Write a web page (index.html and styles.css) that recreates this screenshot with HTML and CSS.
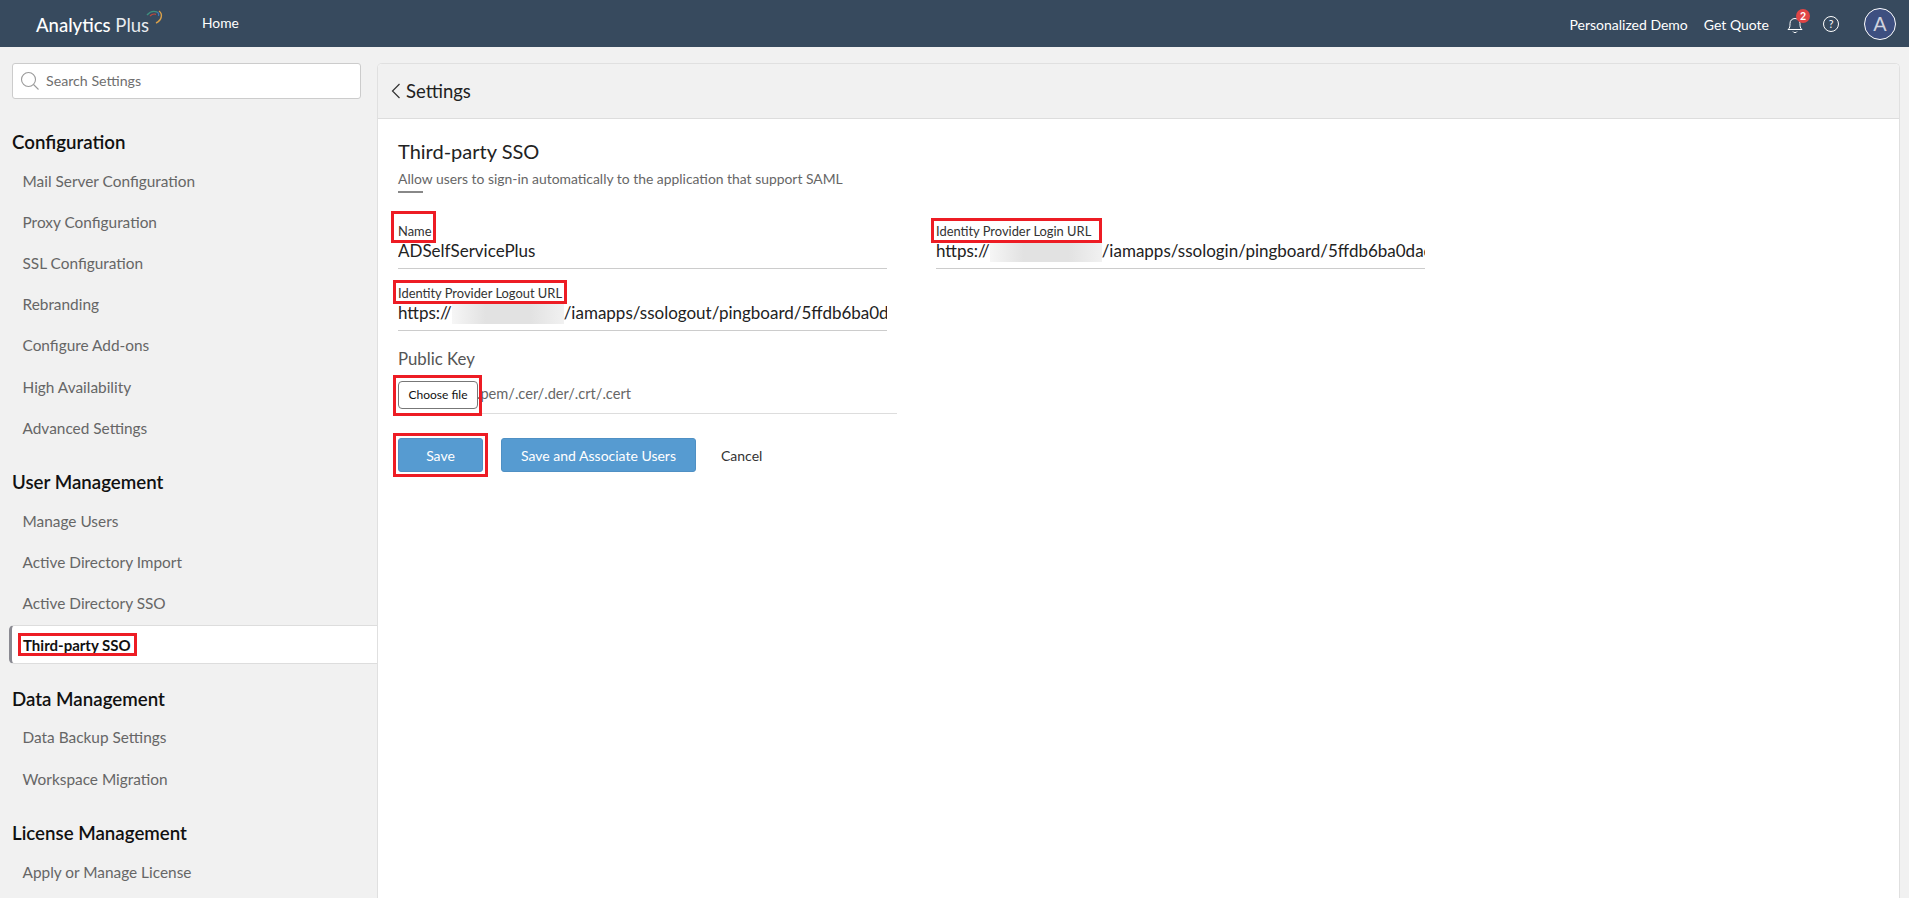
FILE: index.html
```html
<!DOCTYPE html>
<html lang="en">
<head>
<meta charset="utf-8">
<title>Analytics Plus - Third-party SSO</title>
<link rel="stylesheet" href="styles.css">
</head>
<body>
<header class="topbar">
  <div class="brand">
    <span class="brand-name"><b>Analytics</b> Plus</span>
    <svg class="brand-swirl" width="18" height="18" viewBox="0 0 18 18" fill="none">
      <path d="M1 5 C4 1.5 8 .8 11 2" stroke="#3f8f7f" stroke-width="1.4"/>
      <path d="M4 6 C6 4 8 3.6 10 4.4" stroke="#c0483c" stroke-width="1.2"/>
      <path d="M11 2 C13 3 13 4.500 12.500 6" stroke="#3d78b5" stroke-width="1.2"/>
      <path d="M13 1 C17 4 16 10 10 13" stroke="#d9a04a" stroke-width="1.4"/>
    </svg>
  </div>
  <nav class="topnav"><a>Home</a></nav>
  <div class="topright">
    <a class="toplink">Personalized Demo</a>
    <a class="toplink">Get Quote</a>
    <span class="bell">
      <svg width="16" height="18" viewBox="0 0 16 18" fill="none" stroke="#fff" stroke-width="1">
        <path d="M1 13.500 C3 12 3 10 3 7.500 C3 4.500 5 2.500 8 2.500 C11 2.500 13 4.500 13 7.500 C13 10 13 12 15 13.500 Z"/>
        <path d="M6 15.500 C6.500 17 9.500 17 10 15.500"/>
      </svg>
      <span class="badge">2</span>
    </span>
    <span class="help">?</span>
    <span class="avatar">A</span>
  </div>
</header>

<div class="layout">
  <aside class="sidebar">
    <div class="search">
      <svg width="20" height="20" viewBox="0 0 20 20" fill="none" stroke="#9a9a9a" stroke-width="1.100">
        <circle cx="8.500" cy="8.500" r="7"/>
        <path d="M13.500 13.500 L18.500 18.500"/>
      </svg>
      <span class="search-text">Search Settings</span>
    </div>

    <h2 class="group-title first">Configuration</h2>
    <ul class="menu">
      <li>Mail Server Configuration</li>
      <li>Proxy Configuration</li>
      <li>SSL Configuration</li>
      <li>Rebranding</li>
      <li>Configure Add-ons</li>
      <li>High Availability</li>
      <li>Advanced Settings</li>
    </ul>

    <h2 class="group-title">User Management</h2>
    <ul class="menu menu-active">
      <li>Manage Users</li>
      <li>Active Directory Import</li>
      <li>Active Directory SSO</li>
      <li class="active"><span class="marked">Third-party SSO<i class="red red-menu"></i></span></li>
    </ul>

    <h2 class="group-title">Data Management</h2>
    <ul class="menu">
      <li>Data Backup Settings</li>
      <li>Workspace Migration</li>
    </ul>

    <h2 class="group-title">License Management</h2>
    <ul class="menu">
      <li>Apply or Manage License</li>
    </ul>
  </aside>

  <main class="panel">
    <div class="panel-head">
      <svg width="10" height="16" viewBox="0 0 10 16" fill="none" stroke="#333" stroke-width="1.200">
        <path d="M8.500 1 L1.500 8 L8.500 15"/>
      </svg>
      <span>Settings</span>
    </div>
    <div class="panel-body">
      <h1 class="page-title">Third-party SSO</h1>
      <p class="page-sub">Allow users to sign-in automatically to the application that support SAML</p>
      <div class="rule"></div>

      <div class="form-grid">
        <div class="field">
          <label class="marked">Name<i class="red red-name"></i></label>
          <div class="value">ADSelfServicePlus</div>
        </div>
        <div class="field">
          <label class="marked">Identity Provider Login URL<i class="red red-login"></i></label>
          <div class="value">https://<span class="blur"></span>/iamapps/ssologin/pingboard/5ffdb6ba0dac</div>
        </div>
        <div class="field">
          <label class="marked">Identity Provider Logout URL<i class="red red-label"></i></label>
          <div class="value">https://<span class="blur"></span>/iamapps/ssologout/pingboard/5ffdb6ba0d</div>
        </div>
      </div>

      <div class="key">
        <div class="key-title">Public Key</div>
        <div class="key-row">
          <button class="file-btn marked">Choose file<i class="red red-file"></i></button>
          <span class="key-hint">.pem/.cer/.der/.crt/.cert</span>
        </div>
      </div>

      <div class="actions">
        <button class="btn save marked">Save<i class="red red-save"></i></button>
        <button class="btn assoc">Save and Associate Users</button>
        <a class="cancel">Cancel</a>
      </div>
    </div>
  </main>
</div>
</body>
</html>
```
FILE: styles.css
```css
* { box-sizing: border-box; }
html, body { margin: 0; height: 100%; }
body {
  width: 1909px;
  height: 898px;
  overflow: hidden;
  background: #f1f1f1;
  font-family: Lato, "Open Sans", sans-serif;
  color: #222;
}

.topbar {
  height: 47px;
  background: #374a5e;
  display: flex;
  align-items: center;
  color: #fff;
}
.brand {
  display: flex;
  align-items: flex-start;
  margin-left: 36px;
  width: 166px;
}
.brand-name { font-size: 18.500px; padding-top: 3px; font-weight: 400; color: #e8ebef; white-space: nowrap; }
.brand-name b { font-weight: 500; color: #fff; }
.brand-swirl { margin-left: -3px; margin-top: -1px; }
.topnav { font-size: 13.800px; margin-top: -3px; }
.topright {
  margin-left: auto;
  display: flex;
  align-items: center;
  padding-right: 13px;
}
.toplink { font-size: 14px; padding-top: 2px; }
.toplink + .toplink { margin-left: 16px; }
.bell { position: relative; margin-left: 18px; width: 16px; height: 18px; margin-top: 3px; margin-right: 20px; }
.badge {
  position: absolute;
  left: 9px;
  top: -7px;
  width: 14px;
  height: 14px;
  border-radius: 50%;
  background: #e04545;
  color: #fff;
  font-size: 10.500px;
  font-weight: 700;
  line-height: 14px;
  text-align: center;
}
.help {
  width: 16px;
  height: 16px;
  border: 1px solid #fff;
  border-radius: 50%;
  font-size: 10.500px;
  line-height: 14px;
  text-align: center;
  margin-right: 25px;
}
.avatar {
  width: 32px;
  height: 32px;
  border: 1px solid #fff;
  border-radius: 50%;
  background: #3d4f80;
  color: #cfd2de;
  font-family: "Liberation Sans", sans-serif;
  font-size: 20px;
  line-height: 30px;
  text-align: center;
}

.layout { display: flex; height: 851px; }

.sidebar {
  width: 377px;
  flex: none;
  padding: 16px 0 0 12px;
  overflow: hidden;
}
.search {
  width: 349px;
  height: 36px;
  background: #fff;
  border: 1px solid #ccc;
  border-radius: 3px;
  display: flex;
  align-items: center;
  padding-left: 7px;
  gap: 6px;
  font-size: 14.200px;
  color: #6f6f6f;
}
.search-text { padding-bottom: 2px; }
.group-title {
  margin: 22px 0 0;
  font-size: 18.700px;
  line-height: 24px;
  font-weight: 600;
  color: #111;
}
.group-title.first { margin-top: 31px; }
.menu { list-style: none; margin: 6px 0 0; padding: 0; }
.menu-active { padding-bottom: 0.400px; }
.menu li {
  height: 41.200px;
  padding-left: 10.500px;
  display: flex;
  align-items: center;
  font-size: 15.400px;
  color: #666;
}
.menu li.active {
  height: 39px;
  margin: 1.600px 0 0 -3px;
  padding-left: 11px;
  padding-top: 1px;
  background: #fff;
  border: 1px solid #ddd;
  border-left: 3px solid #8a8a92;
  border-right: 0;
  border-radius: 5px 0 0 5px;
  font-size: 15px;
  color: #111;
  font-weight: 700;
}

.panel {
  width: 1523px;
  flex: none;
  margin-top: 16px;
  background: #fff;
  border: 1px solid #e0e0e0;
  border-bottom: 0;
  border-radius: 5px 5px 0 0;
  overflow: hidden;
}
.panel-head {
  height: 55px;
  background: #f1f1f1;
  border-bottom: 1px solid #ddd;
  display: flex;
  align-items: center;
  gap: 5px;
  padding-left: 13px;
  font-size: 18.500px;
  color: #222;
}
.panel-body { padding: 19px 0 0 20px; }
.page-title { margin: 0; font-size: 20px; line-height: 26px; font-weight: 400; color: #222; }
.page-sub { margin: 6px 0 0; font-size: 13.900px; line-height: 18px; color: #666; }
.rule { width: 25px; height: 2px; background: #888; margin-top: 3px; }

.form-grid {
  display: grid;
  grid-template-columns: 489px 489px;
  column-gap: 49px;
  row-gap: 16px;
  margin-top: 30px;
}
.field { border-bottom: 1px solid #ccc; height: 46px; }
.field label { display: block; font-size: 12.900px; line-height: 16px; color: #333; width: max-content; }
.value {
  font-size: 17px;
  line-height: 24px;
  white-space: nowrap;
  overflow: hidden;
  color: #222;
}
.blur {
  display: inline-block;
  width: 112px;
  height: 21px;
  vertical-align: -5px;
  background: linear-gradient(90deg, #f6f6f6, #e2e2e2 30%, #e2e2e2 70%, #f1f1f1);
}

.marked { position: relative; }
.red { position: absolute; border: 3px solid #ed1c24; pointer-events: none; }
.red-name { left: -7px; right: -5px; top: -12px; bottom: -4px; }
.red-label { left: -5px; right: -5px; top: -5px; bottom: -3px; }
.red-login { left: -5px; right: -11px; top: -5px; bottom: -4px; }
.red-menu { left: -5px; right: -6px; top: -3px; bottom: -2px; }
.red-file { left: -6px; right: -5px; top: -7px; bottom: -8px; }
.red-save { left: -6px; right: -6px; top: -6px; bottom: -6px; }

.key { margin-top: 18px; width: 499px; }
.key-title { font-size: 16.800px; line-height: 20px; color: #555; }
.key-row {
  display: flex;
  align-items: flex-start;
  height: 45px;
  border-bottom: 1px solid #ddd;
  padding-top: 12px;
}
.key-hint { font-size: 14.600px; line-height: 26px; color: #666; margin-left: -1px; }
.file-btn {
  width: 80px;
  height: 28px;
  padding: 0 0 1px;
  background: #fff;
  border: 1px solid #777;
  border-radius: 4px;
  font: 12px Lato, sans-serif;
  color: #111;
}

.actions { display: flex; align-items: center; margin-top: 24px; }
.btn {
  height: 34px;
  padding: 0;
  background: #569bd1;
  border: 1px solid #4f90c4;
  border-radius: 3px;
  color: #fff;
  font: 14px Lato, sans-serif;
}
.save { width: 85px; }
.assoc { width: 195px; margin-left: 18px; }
.cancel { margin-left: 25px; font-size: 14px; color: #333; }
```
